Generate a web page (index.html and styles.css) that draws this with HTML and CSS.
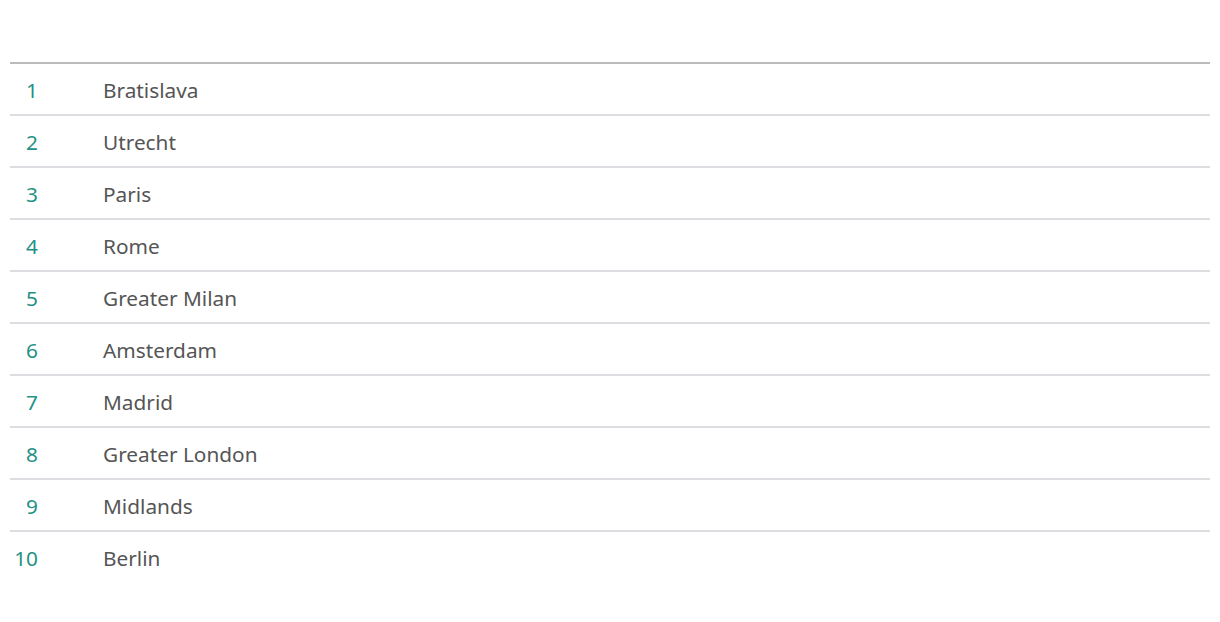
FILE: index.html
```html
<!DOCTYPE html>
<html>
<head>
<meta charset="utf-8">
<link rel="stylesheet" href="styles.css">
</head>
<body>
<div class="wrap">
  <table class="rank">
    <tbody>
      <tr><td class="num">1</td><td class="name">Bratislava</td></tr>
      <tr><td class="num">2</td><td class="name">Utrecht</td></tr>
      <tr><td class="num">3</td><td class="name">Paris</td></tr>
      <tr><td class="num">4</td><td class="name">Rome</td></tr>
      <tr><td class="num">5</td><td class="name">Greater Milan</td></tr>
      <tr><td class="num">6</td><td class="name">Amsterdam</td></tr>
      <tr><td class="num">7</td><td class="name">Madrid</td></tr>
      <tr><td class="num">8</td><td class="name">Greater London</td></tr>
      <tr><td class="num">9</td><td class="name">Midlands</td></tr>
      <tr><td class="num">10</td><td class="name">Berlin</td></tr>
    </tbody>
  </table>
</div>
</body>
</html>
```
FILE: styles.css
```css
html, body {
  margin: 0;
  padding: 0;
  background: #fff;
}
.wrap {
  padding: 62px 10px 0 10px;
}
.rank {
  width: 100%;
  border-collapse: collapse;
  border-top: 2px solid #bbbbbb;
  font-family: "Noto Sans", sans-serif;
  font-size: 20.8px;
}
.rank tr {
  height: 52px;
  border-bottom: 2px solid #dcdde0;
}
.rank tr:last-child {
  border-bottom: none;
}
.rank td {
  padding: 1px 0 0 0;
  vertical-align: middle;
}
.num {
  width: 28px;
  text-align: right;
  color: #1f9185;
}
.name {
  padding-left: 65px !important;
  color: #555555;
}
```
